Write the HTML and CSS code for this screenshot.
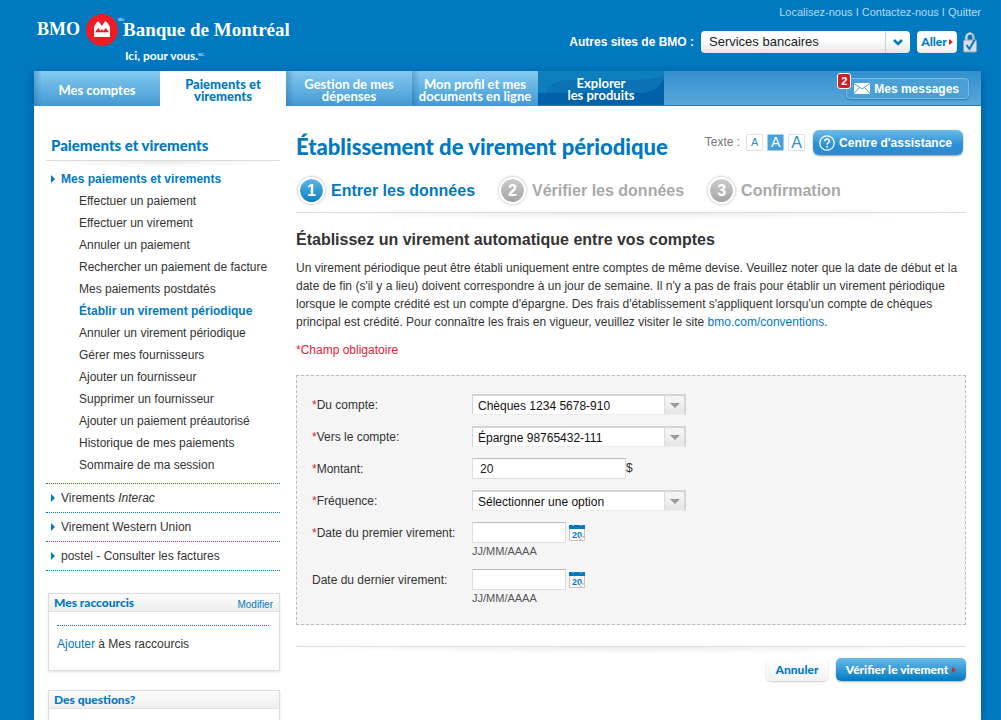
FILE: index.html
```html
<!DOCTYPE html>
<html lang="fr">
<head>
<meta charset="utf-8">
<title>BMO Banque de Montréal - Établissement de virement périodique</title>
<link rel="stylesheet" href="styles.css">
</head>
<body>
<div class="page">
  <header class="header">
    <div class="brand">
      <div class="brand-row">
        <span class="brand-short">BMO</span>
        <svg class="brand-mark" viewBox="0 0 32 32" width="32" height="32" aria-hidden="true">
          <circle cx="16" cy="16" r="16" fill="#ee1c25"/>
          <path d="M8 23V13l1.500-3L12 7l2.200 2.500L15.800 12l1.600-2.500L19.600 7l2.600 3L24 13v10z" fill="#fff"/>
          <path d="M9 18.200l3.200-4.200 2.300 2.700 1.500-1.500 1.500 1.500 2.300-2.700 3.200 4.200z" fill="#ee1c25"/>
        </svg>
        <sup class="mark">MD</sup>
        <span class="brand-long">Banque de Montréal</span>
      </div>
      <div class="tagline">Ici, pour vous.<sup class="mark">MC</sup></div>
    </div>
    <div class="tools">
      <nav class="links"><a href="#">Localisez-nous</a> I <a href="#">Contactez-nous</a> I <a href="#">Quitter</a></nav>
      <form class="sites">
        <label for="site">Autres sites de BMO :</label>
        <span class="site-picker">
          <select id="site"><option>Services bancaires</option></select>
          <svg viewBox="0 0 12 8" width="12" height="8" aria-hidden="true"><path d="M2 2l4 4 4-4" fill="none" stroke="#0079c1" stroke-width="2.500"/></svg>
        </span>
        <button class="go" type="button">Aller<i class="arrow red"></i></button>
        <svg class="lock" viewBox="0 0 14 21" width="14" height="21" aria-hidden="true">
          <path d="M3.500 10V5.500a3.500 4 0 0 1 7 0V10" fill="none" stroke="#a9bccb" stroke-width="2.600"/>
          <path d="M3 10V5.500a4 4.500 0 0 1 5-4" fill="none" stroke="#edf3f7" stroke-width="1"/>
          <rect x="0.500" y="8" width="13" height="12" rx="1.500" fill="#d7dde2" stroke="#8da5b7"/>
          <path d="M3.500 13l3 4 5-9" fill="none" stroke="#0079c1" stroke-width="2"/>
        </svg>
      </form>
    </div>
  </header>

  <div class="panel">
    <nav class="tabs">
      <a class="tab" href="#">Mes comptes</a>
      <a class="tab current" href="#">Paiements et<br>virements</a>
      <a class="tab" href="#">Gestion de mes<br>dépenses</a>
      <a class="tab" href="#">Mon profil et mes<br>documents en ligne</a>
      <a class="tab explore" href="#">
        <svg viewBox="0 0 126 34" preserveAspectRatio="none" aria-hidden="true">
          <rect width="126" height="34" fill="#0d7fbd"/>
          <path d="M0 22h126V34H0z" fill="#0061a8"/>
          <path d="M4 34C6 15 14 9 34 9h54c22 0 32-1 38-6-4 14-12 19-28 19H7z" fill="#0a72b5"/>
          <path d="M4 34l3-12h92c15 0 24-6 27-16v28z" fill="#0061a8"/>
        </svg>
        <span>Explorer<br>les produits</span>
      </a>
      <a class="messages" href="#">
        <svg viewBox="0 0 16 11" width="16" height="11" aria-hidden="true"><rect width="16" height="11" rx="1" fill="#fff"/><path d="M0 .5l8 5.500L16 .5M0 10.500l5.500-6M16 10.500l-5.500-6" fill="none" stroke="#4b9fd4"/></svg>
        Mes messages<span class="badge">2</span>
      </a>
    </nav>

    <div class="columns">
      <aside class="sidebar">
        <h2 class="side-title">Paiements et virements</h2>
        <div class="fade-rule"></div>
        <ul class="menu">
          <li class="open"><a href="#"><i class="arrow"></i>Mes paiements et virements</a>
            <ul class="submenu">
              <li><a href="#">Effectuer un paiement</a></li>
              <li><a href="#">Effectuer un virement</a></li>
              <li><a href="#">Annuler un paiement</a></li>
              <li><a href="#">Rechercher un paiement de facture</a></li>
              <li><a href="#">Mes paiements postdatés</a></li>
              <li><a class="active" href="#">Établir un virement périodique</a></li>
              <li><a href="#">Annuler un virement périodique</a></li>
              <li><a href="#">Gérer mes fournisseurs</a></li>
              <li><a href="#">Ajouter un fournisseur</a></li>
              <li><a href="#">Supprimer un fournisseur</a></li>
              <li><a href="#">Ajouter un paiement préautorisé</a></li>
              <li><a href="#">Historique de mes paiements</a></li>
              <li><a href="#">Sommaire de ma session</a></li>
            </ul>
          </li>
          <li class="closed"><a href="#"><i class="arrow"></i><span>Virements <em>Interac</em></span></a></li>
          <li class="closed"><a href="#"><i class="arrow"></i>Virement Western Union</a></li>
          <li class="closed"><a href="#"><i class="arrow"></i>postel - Consulter les factures</a></li>
        </ul>
        <section class="box">
          <div class="box-head"><h3>Mes raccourcis</h3><a href="#">Modifier</a></div>
          <p class="box-body"><a href="#">Ajouter</a> à Mes raccourcis</p>
        </section>
        <section class="box last">
          <div class="box-head"><h3>Des questions?</h3></div>
        </section>
      </aside>

      <main class="main">
        <div class="title-row">
          <h1>Établissement de virement périodique</h1>
          <div class="text-size">
            <span>Texte :</span>
            <button class="size small" type="button">A</button>
            <button class="size medium" type="button">A</button>
            <button class="size large" type="button">A</button>
          </div>
          <button class="help" type="button">
            <svg viewBox="0 0 16 16" width="16" height="16" aria-hidden="true"><circle cx="8" cy="8" r="7.200" fill="none" stroke="#fff" stroke-width="1.300"/><path d="M5.700 6.300C5.700 3.200 10.400 3.300 10.300 6c0 1.700-2.200 1.800-2.200 3.700" fill="none" stroke="#fff" stroke-width="1.500"/><circle cx="8.100" cy="11.800" r="1" fill="#fff"/></svg>
            Centre d'assistance
          </button>
        </div>
        <ol class="steps">
          <li class="now"><span class="num">1</span>Entrer les données</li>
          <li><span class="num">2</span>Vérifier les données</li>
          <li><span class="num">3</span>Confirmation</li>
        </ol>
        <div class="fade-rule"></div>
        <h2 class="subtitle">Établissez un virement automatique entre vos comptes</h2>
        <p class="intro">Un virement périodique peut être établi uniquement entre comptes de même devise. Veuillez noter que la date de début et la date de fin (s'il y a lieu) doivent correspondre à un jour de semaine. Il n'y a pas de frais pour établir un virement périodique lorsque le compte crédité est un compte d'épargne. Des frais d'établissement s'appliquent lorsqu'un compte de chèques principal est crédité. Pour connaître les frais en vigueur, veuillez visiter le site <a href="#">bmo.com/conventions</a>.</p>
        <p class="required">*Champ obligatoire</p>
        <form>
          <div class="fields">
            <label for="from"><b>*</b>Du compte:</label>
            <span class="picker"><select id="from"><option>Chèques 1234 5678-910</option></select><i class="caret"></i></span>
            <label for="to"><b>*</b>Vers le compte:</label>
            <span class="picker"><select id="to"><option>Épargne 98765432-111</option></select><i class="caret"></i></span>
            <label for="amount"><b>*</b>Montant:</label>
            <span class="line"><input class="amount" id="amount" type="text" value="20">$</span>
            <label for="freq"><b>*</b>Fréquence:</label>
            <span class="picker"><select id="freq"><option>Sélectionner une option</option></select><i class="caret"></i></span>
            <label for="first"><b>*</b>Date du premier virement:</label>
            <div class="date">
              <span class="line"><input id="first" type="text">
                <button class="cal" type="button" aria-label="Calendrier du premier virement"><svg viewBox="0 0 16 17" width="16" height="17"><path d="M.5 4v12.500h15V4" fill="#fff" stroke="#c4c8ca"/><path d="M0 1h16v4H0z" fill="#0079c1"/><path d="M4 0v2M12 0v2" stroke="#d6e9f4"/><text class="cal-num" x="3" y="14">20</text><path d="M11 16.500v-4h4.500z" fill="#fff" stroke="#aaa" stroke-width=".7"/></svg></button></span>
              <small>JJ/MM/AAAA</small>
            </div>
            <label for="last">Date du dernier virement:</label>
            <div class="date">
              <span class="line"><input id="last" type="text">
                <button class="cal" type="button" aria-label="Calendrier du dernier virement"><svg viewBox="0 0 16 17" width="16" height="17"><path d="M.5 4v12.500h15V4" fill="#fff" stroke="#c4c8ca"/><path d="M0 1h16v4H0z" fill="#0079c1"/><path d="M4 0v2M12 0v2" stroke="#d6e9f4"/><text class="cal-num" x="3" y="14">20</text><path d="M11 16.500v-4h4.500z" fill="#fff" stroke="#aaa" stroke-width=".7"/></svg></button></span>
              <small>JJ/MM/AAAA</small>
            </div>
          </div>
          <div class="fade-rule"></div>
          <div class="actions">
            <button class="cancel" type="button">Annuler</button>
            <button class="submit" type="button">Vérifier le virement<i class="arrow red"></i></button>
          </div>
        </form>
      </main>
    </div>
  </div>
</div>
</body>
</html>
```

FILE: styles.css
```css
* { box-sizing: border-box; }
body {
  margin: 0;
  background: #0079c1;
  color: #333;
  font: 12px/18px "Liberation Sans", Arial, sans-serif;
}
h1, h2, h3, p, ul, ol { margin: 0; padding: 0; }
ul, ol { list-style: none; }
a { color: #0079c1; text-decoration: none; }
button, select, input { font: inherit; margin: 0; }
button { border: 0; padding: 0; cursor: pointer; }
select { appearance: none; border: 0; border-radius: 0; color: #222; }
svg { flex: none; }

.page {
  display: flex;
  flex-direction: column;
  min-height: 100vh;
  padding: 0 20px 0 34px;
}

/* Header */
.header { display: flex; justify-content: space-between; height: 71px; color: #fff; }
.brand { padding: 13px 0 0 3px; font-family: "Liberation Serif", serif; font-weight: bold; }
.brand-row { display: flex; align-items: center; height: 33px; line-height: 33px; }
.brand-short { width: 49px; font-size: 18px; }
.brand-long { font-size: 19px; }
.mark { width: 5px; font: 4px/4px "Liberation Sans", sans-serif; align-self: flex-start; margin-top: 5px; vertical-align: 4px; }
.tagline { padding-left: 88px; font: bold 12px/20px Lato, sans-serif; }
.tools { display: flex; flex-direction: column; align-items: flex-end; padding-top: 3px; }
.links { font-size: 11px; color: #b5dcf3; }
.links a { color: #b5dcf3; }
.sites { display: flex; align-items: center; gap: 7px; padding: 10px 4px 0 0; font-weight: bold; }
.sites .lock { margin-left: -1px; }
.site-picker { display: grid; width: 209px; align-items: center; }
.site-picker select, .site-picker svg { grid-area: 1 / 1; }
.site-picker select {
  height: 22px;
  padding: 0 8px;
  font-size: 13px;
  font-weight: normal;
  border-radius: 4px;
  background: linear-gradient(to right, transparent 184px, #c9ced1 184px, #c9ced1 185px, transparent 185px), linear-gradient(#fff 40%, #e3e6e8);
}
.site-picker svg { justify-self: end; margin-right: 6px; pointer-events: none; }
.arrow {
  flex: none;
  width: 0;
  height: 0;
  border-left: 4px solid #0079c1;
  border-top: 4px solid transparent;
  border-bottom: 4px solid transparent;
}
.arrow.red { border-left-color: #ee1c25; border-top-width: 3px; border-bottom-width: 3px; }
.go {
  display: flex;
  align-items: center;
  justify-content: center;
  gap: 2px;
  width: 40px;
  height: 22px;
  border-radius: 4px;
  background: linear-gradient(#fff 50%, #e9edf0);
  color: #0079c1;
  font: 900 12px/20px Lato, sans-serif;
}

/* Panel and tabs */
.panel { flex: 1; display: flex; flex-direction: column; background: #fff; box-shadow: 0 2px 10px rgba(0, 50, 100, .45); }
.tabs { display: flex; height: 35px; background: linear-gradient(#3190ce, #5aa8da); border-bottom: 1px solid #1c7cc0; }
.tab {
  display: grid;
  place-content: center;
  width: 126px;
  height: 35px;
  padding-top: 3px;
  background: linear-gradient(to right, rgba(0, 70, 120, .25), transparent 8px), linear-gradient(#83caf0, #4399d3);
  color: #fff;
  font: bold 13px/12px Lato, sans-serif;
  text-align: center;
  white-space: nowrap;
}
.tab.current { background: #fff; color: #0079c1; font-weight: 900; }
.tab.explore { padding-top: 0; height: 34px; }
.explore svg, .explore span { grid-area: 1 / 1; }
.explore svg { width: 126px; height: 34px; }
.explore span { align-self: center; padding-top: 2px; }
.messages {
  position: relative;
  display: flex;
  align-items: center;
  gap: 4px;
  height: 21px;
  margin: 7px 12px 0 auto;
  padding: 0 5px 0 7px;
  border: 1px solid #7bbbe3;
  border-radius: 4px;
  background: #4a9fd4;
  box-shadow: 0 1px 2px rgba(0, 60, 110, .4);
  color: #fff;
  font-weight: bold;
}
.badge {
  position: absolute;
  left: -10px;
  top: -6px;
  width: 14px;
  height: 16px;
  border: 1px solid #fff;
  border-radius: 3px;
  background: #cf2027;
  font-size: 11px;
  line-height: 14px;
  text-align: center;
}

/* Columns */
.columns { flex: 1; display: flex; gap: 16px; padding: 24px 15px 0 12px; }
.fade-rule {
  height: 8px;
  border-top: 1px solid #dcdcdc;
  background: radial-gradient(ellipse 50% 7px at 50% 0, #ececec, transparent);
}
.sidebar { flex: none; display: flex; flex-direction: column; width: 234px; }
.side-title { padding: 6px 0 5px 5px; color: #0079c1; font: 900 15px/19px Lato, sans-serif; }
.menu a { display: flex; align-items: center; color: #333; }
.menu .open > a { height: 21px; gap: 6px; padding-left: 5px; color: #0079c1; font-weight: bold; }
.submenu { padding: 1px 0 7px 33px; line-height: 22px; }
.menu .active { color: #0079c1; font-weight: bold; }
.menu { border-bottom: 1px dotted #0079c1; }
.closed { border-top: 1px dotted #0079c1; }
.closed a { height: 28px; gap: 6px; padding-left: 5px; }
.box { margin: 22px 0 0 2px; min-height: 78px; border: 1px solid #dcdcdc; box-shadow: 0 1px 2px rgba(0, 0, 0, .12); }
.box.last { flex: 1; min-height: 28px; margin-top: 19px; border-bottom: 0; }
.box-head {
  display: flex;
  justify-content: space-between;
  height: 18px;
  padding: 0 6px 0 5px;
  border-bottom: 1px solid #e0e0e0;
  background: linear-gradient(#fcfcfc, #eee);
}
.box-head h3 { color: #0079c1; font: 900 12px/18px Lato, sans-serif; }
.box-head a { font-size: 10px; line-height: 22px; }
.box-body { margin: 13px 10px 0 8px; padding-top: 9px; border-top: 1px dotted #0079c1; }

/* Main content */
.main { flex: 1; min-width: 0; }
.title-row { display: flex; align-items: flex-start; height: 46px; }
h1 { flex: 1; color: #0079c1; font: 900 22px/34px Lato, sans-serif; white-space: nowrap; }
.text-size { display: flex; gap: 4px; align-items: center; height: 20px; margin: 2px 8px 0 0; color: #777; }
.text-size span { margin-right: 2px; }
.size {
  width: 17px;
  height: 17px;
  border: 1px solid #e2e2e2;
  border-radius: 1px;
  background: #fff;
  color: #2c8fd0;
  line-height: 15px;
}
.small { font-size: 11px; }
.medium { border-color: #9fcdea; background: #48a1d8; color: #fff; font-size: 14px; }
.large { font-size: 16px; }
.help {
  display: flex;
  align-items: center;
  gap: 4px;
  height: 25px;
  margin-right: 3px;
  padding: 0 11px 0 6px;
  border-radius: 6px;
  background: linear-gradient(#6bbce8, #2c8fd5 60%, #2c8bd2);
  box-shadow: 0 1px 2px rgba(0, 0, 0, .4);
  color: #fff;
  font-weight: bold;
}
.steps { display: flex; gap: 24px; height: 36px; padding: 0 0 7px 2px; color: #a9a9a9; font-size: 16px; font-weight: bold; }
.steps li { display: flex; align-items: center; gap: 6px; }
.steps .now { color: #0079c1; }
.num {
  display: grid;
  place-content: center;
  width: 27px;
  height: 27px;
  border: 2px solid #fff;
  border-radius: 50%;
  background: linear-gradient(#ccc, #a4a4a4) padding-box;
  box-shadow: 0 0 3px rgba(0, 0, 0, .35);
  color: #fff;
}
.now .num { background: linear-gradient(#5db7e6, #0d7fc5) padding-box; }
.subtitle { padding: 10px 0 9px; font: bold 16px/20px "Liberation Sans", sans-serif; }
.required { padding: 10px 0 16px; color: #e31b35; }
.fields {
  display: grid;
  grid-template-columns: 160px 1fr;
  row-gap: 10px;
  align-items: start;
  padding: 18px 15px;
  border: 1px dashed #bbb;
  background: #f5f5f5;
  line-height: 21px;
}
.fields label { padding-top: 1px; }
.fields b { color: #e31b35; font-weight: normal; }
.picker { display: flex; width: 214px; height: 21px; border: 1px solid #d5d5d5; border-width: 2px 2px 1px 1px; border-bottom-color: #eee; }
.picker select { flex: 1; padding: 0 5px; background: #fff; color: #111; }
.caret { width: 20px; border-left: 1px solid #ddd; background: linear-gradient(#f6f6f6, #e6e6e6); display: grid; place-content: center; }
.caret::after { content: ""; border: 5px solid transparent; border-top-color: #999; border-bottom: 0; }
.line { display: flex; align-items: center; height: 21px; gap: 3px; }
.line input { width: 94px; height: 21px; border: 1px solid #ddd; border-top-color: #bbb; background: #fff; padding: 1px 7px 0; color: #222; }
.line .amount { width: 154px; margin-right: -3px; }
.cal { display: flex; background: none; }
.cal-num { fill: #0079c1; font: bold 9px "Liberation Sans", sans-serif; }
.date small { display: block; padding-top: 1px; font-size: 11px; line-height: 15px; color: #555; }
form > .fade-rule { margin-top: 21px; }
.actions { display: flex; justify-content: flex-end; gap: 8px; padding: 4px 0 20px; }
.cancel, .submit { height: 23px; border-radius: 5px; font: 900 12px/22px Lato, sans-serif; box-shadow: 0 1px 2px rgba(0, 0, 0, .3); }
.cancel { width: 62px; background: linear-gradient(#fff, #f2f2f2); color: #0079c1; box-shadow: 0 1px 2px rgba(0, 0, 0, .2); }
.submit { display: flex; align-items: center; justify-content: center; gap: 4px; width: 130px; background: linear-gradient(#69bbe8, #0079c1); color: #fff; }
```
